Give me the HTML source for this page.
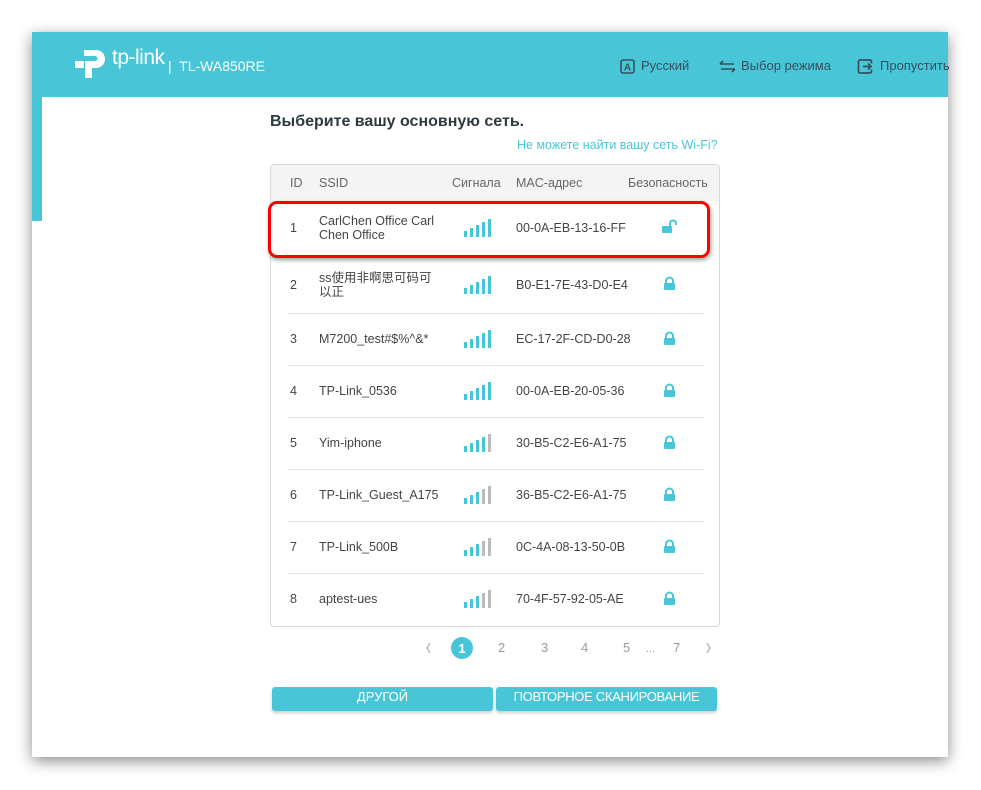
<!DOCTYPE html>
<html><head><meta charset="utf-8"><style>
*{margin:0;padding:0;box-sizing:border-box}
body{width:981px;height:790px;background:#fff;font-family:"Liberation Sans","Noto Sans CJK SC",sans-serif;position:relative;overflow:hidden}
.win{position:absolute;left:32px;top:32px;width:916px;height:725px;background:#fff;box-shadow:0 4px 14px rgba(0,0,0,.45)}
.hdr{position:absolute;left:0;top:0;width:916px;height:65px;background:#48c6d8}
.strip{position:absolute;left:0;top:65px;width:10px;height:124px;background:#48c6d8}
.card{position:absolute;left:10px;top:65px;width:906px;height:660px;background:#fff;border-radius:6px 0 0 0}
.abs{position:absolute}
.nav{position:absolute;top:26px;color:#35505a;font-size:13px}
.t{position:absolute;font-size:12.5px;color:#444}
.row{position:absolute;left:17px;width:416px;height:1px;background:#e2e2e2}
</style></head><body>
<div class="win">
<div class="hdr">
 <svg class="abs" style="left:42px;top:15px" width="34" height="34" viewBox="0 0 34 34"><path d="M10 3h12a9 9 0 0 1 0 18h-4v10h-7V14h10a2 2 0 0 0 0-5H10z" fill="#fff"/><rect x="1" y="14" width="9" height="7" fill="#fff"/></svg>
 <div class="abs" style="left:80px;top:14px;color:#fff;font-size:21px;letter-spacing:-0.5px">tp-link</div>
 <div class="abs" style="left:136px;top:26px;color:#fff;font-size:14px">|&nbsp; TL-WA850RE</div>
 <svg class="abs" style="left:588px;top:27px" width="15" height="15"><rect x="1" y="1" width="13" height="13" rx="2" fill="none" stroke="#35505a" stroke-width="1.6"/><text x="7.5" y="11.5" font-size="10" font-weight="bold" text-anchor="middle" fill="#35505a" font-family="Liberation Sans">A</text></svg>
 <div class="nav" style="left:609px">Русский</div>
 <svg class="abs" style="left:687px;top:28px" width="17" height="13"><path d="M1 4h14M4 1L1 4M2 9h14M13 12l3-3" stroke="#35505a" stroke-width="1.6" fill="none"/></svg>
 <div class="nav" style="left:709px">Выбор режима</div>
 <svg class="abs" style="left:825px;top:26px" width="17" height="17"><path d="M9 2H3a1.5 1.5 0 0 0-1.5 1.5v10A1.5 1.5 0 0 0 3 15h6M6 8.5h8M11 5.5l3 3-3 3" stroke="#35505a" stroke-width="1.7" fill="none"/><path d="M9 2h4a1.5 1.5 0 0 1 1.5 1.5v2M9 15h4a1.5 1.5 0 0 0 1.5-1.5v-2" stroke="#35505a" stroke-width="1.7" fill="none"/></svg>
 <div class="nav" style="left:848px">Пропустить</div>
</div>
<div class="strip"></div>
<div class="card"></div>
</div>
<div class="abs" style="left:270px;top:113px;font-size:16px;font-weight:bold;color:#2d3a40">Выберите вашу основную сеть.</div>
<div class="abs" style="left:517px;top:138px;font-size:12.5px;color:#48c6d8">Не можете найти вашу сеть Wi-Fi?</div>
<div class="abs" style="left:270px;top:164px;width:450px;height:463px;border:1px solid #d8d8d8;border-radius:4px;overflow:hidden">
 <div class="abs" style="left:0;top:0;width:450px;height:36px;background:#f4f4f4"></div>
 <div class="t" style="left:19px;top:11px;color:#666">ID</div>
 <div class="t" style="left:48px;top:11px;color:#666">SSID</div>
 <div class="t" style="left:181px;top:11px;color:#666">Сигнала</div>
 <div class="t" style="left:245px;top:11px;color:#666">MAC-адрес</div>
 <div class="t" style="left:357px;top:11px;color:#666">Безопасность</div>
 <div class="row" style="top:148px"></div><div class="row" style="top:200px"></div><div class="row" style="top:252px"></div><div class="row" style="top:304px"></div><div class="row" style="top:356px"></div><div class="row" style="top:408px"></div>
</div>
<div class="abs" style="left:268px;top:201px;width:442px;height:57px;border:3px solid #f00;border-radius:9px;box-shadow:1px 2px 4px rgba(0,0,0,.4)"></div>

<div class="t" style="left:290px;top:221px">1</div><div class="t" style="left:319px;top:214px;line-height:14px;width:125px">CarlChen Office Carl Chen Office</div><div class="t" style="left:516px;top:221px">00-0A-EB-13-16-FF</div>
<div class="t" style="left:290px;top:278px">2</div><div class="t" style="left:319px;top:271px;line-height:14px;width:118px">ss使用非啊思可码可以正</div><div class="t" style="left:516px;top:278px">B0-E1-7E-43-D0-E4</div>
<div class="t" style="left:290px;top:332px">3</div><div class="t" style="left:319px;top:332px">M7200_test#$%^&amp;*</div><div class="t" style="left:516px;top:332px">EC-17-2F-CD-D0-28</div>
<div class="t" style="left:290px;top:384px">4</div><div class="t" style="left:319px;top:384px">TP-Link_0536</div><div class="t" style="left:516px;top:384px">00-0A-EB-20-05-36</div>
<div class="t" style="left:290px;top:436px">5</div><div class="t" style="left:319px;top:436px">Yim-iphone</div><div class="t" style="left:516px;top:436px">30-B5-C2-E6-A1-75</div>
<div class="t" style="left:290px;top:488px">6</div><div class="t" style="left:319px;top:488px">TP-Link_Guest_A175</div><div class="t" style="left:516px;top:488px">36-B5-C2-E6-A1-75</div>
<div class="t" style="left:290px;top:540px">7</div><div class="t" style="left:319px;top:540px">TP-Link_500B</div><div class="t" style="left:516px;top:540px">0C-4A-08-13-50-0B</div>
<div class="t" style="left:290px;top:592px">8</div><div class="t" style="left:319px;top:592px">aptest-ues</div><div class="t" style="left:516px;top:592px">70-4F-57-92-05-AE</div>

<svg class="abs" style="left:0;top:0" width="981" height="790">
<defs>
<g id="b5"><rect x="0" y="12" width="3" height="6" fill="#48c6d8"/><rect x="6" y="9" width="3" height="9" fill="#48c6d8"/><rect x="12" y="6" width="3" height="12" fill="#48c6d8"/><rect x="18" y="3" width="3" height="15" fill="#48c6d8"/><rect x="24" y="0" width="3" height="18" fill="#48c6d8"/></g>
<g id="b4"><rect x="0" y="12" width="3" height="6" fill="#48c6d8"/><rect x="6" y="9" width="3" height="9" fill="#48c6d8"/><rect x="12" y="6" width="3" height="12" fill="#48c6d8"/><rect x="18" y="3" width="3" height="15" fill="#48c6d8"/><rect x="24" y="0" width="3" height="18" fill="#bbb"/></g>
<g id="b3"><rect x="0" y="12" width="3" height="6" fill="#48c6d8"/><rect x="6" y="9" width="3" height="9" fill="#48c6d8"/><rect x="12" y="6" width="3" height="12" fill="#48c6d8"/><rect x="18" y="3" width="3" height="15" fill="#bbb"/><rect x="24" y="0" width="3" height="18" fill="#bbb"/></g>
<g id="lk"><path d="M2 6V4a3.5 3.5 0 0 1 7 0v2" stroke="#48c6d8" stroke-width="2" fill="none"/><rect x="0" y="6" width="11" height="7" rx="1" fill="#48c6d8"/></g>
</defs>
<use href="#b5" x="464" y="219"/><use href="#b5" x="464" y="276"/><use href="#b5" x="464" y="330"/><use href="#b5" x="464" y="382"/>
<use href="#b4" x="464" y="434"/><use href="#b3" x="464" y="486"/><use href="#b3" x="464" y="538"/><use href="#b3" x="464" y="590"/>
<g transform="translate(662,220)"><path d="M8 6V3.5a3 3 0 0 1 6 0V5" stroke="#48c6d8" stroke-width="2" fill="none"/><rect x="0" y="6" width="10" height="7" rx="1" fill="#48c6d8"/></g>
<use href="#lk" x="664" y="277"/><use href="#lk" x="664" y="332"/><use href="#lk" x="664" y="384"/><use href="#lk" x="664" y="436"/><use href="#lk" x="664" y="488"/><use href="#lk" x="664" y="540"/><use href="#lk" x="664" y="592"/>
<path d="M430 643l-3 5 3 5M707 643l3 5-3 5" stroke="#bbb" stroke-width="1.5" fill="none"/>
<circle cx="462" cy="648" r="11" fill="#48c6d8"/>
<g font-family="Liberation Sans" font-size="13" fill="#999"><text x="462" y="653" fill="#fff" font-weight="bold" text-anchor="middle">1</text><text x="498" y="652">2</text><text x="541" y="652">3</text><text x="581" y="652">4</text><text x="623" y="652">5</text><text x="646" y="652" font-size="11">...</text><text x="673" y="652">7</text></g>
</svg>
<div class="abs" style="left:272px;top:687px;width:221px;height:24px;background:#48c6d8;border-radius:3px;box-shadow:0 2px 3px rgba(0,0,0,.2);color:#fff;font-size:13px;text-align:center;line-height:20px">ДРУГОЙ</div>
<div class="abs" style="left:496px;top:687px;width:221px;height:24px;background:#48c6d8;border-radius:3px;box-shadow:0 2px 3px rgba(0,0,0,.2);color:#fff;font-size:13px;text-align:center;line-height:20px;letter-spacing:-0.3px">ПОВТОРНОЕ СКАНИРОВАНИЕ</div>
</body></html>
